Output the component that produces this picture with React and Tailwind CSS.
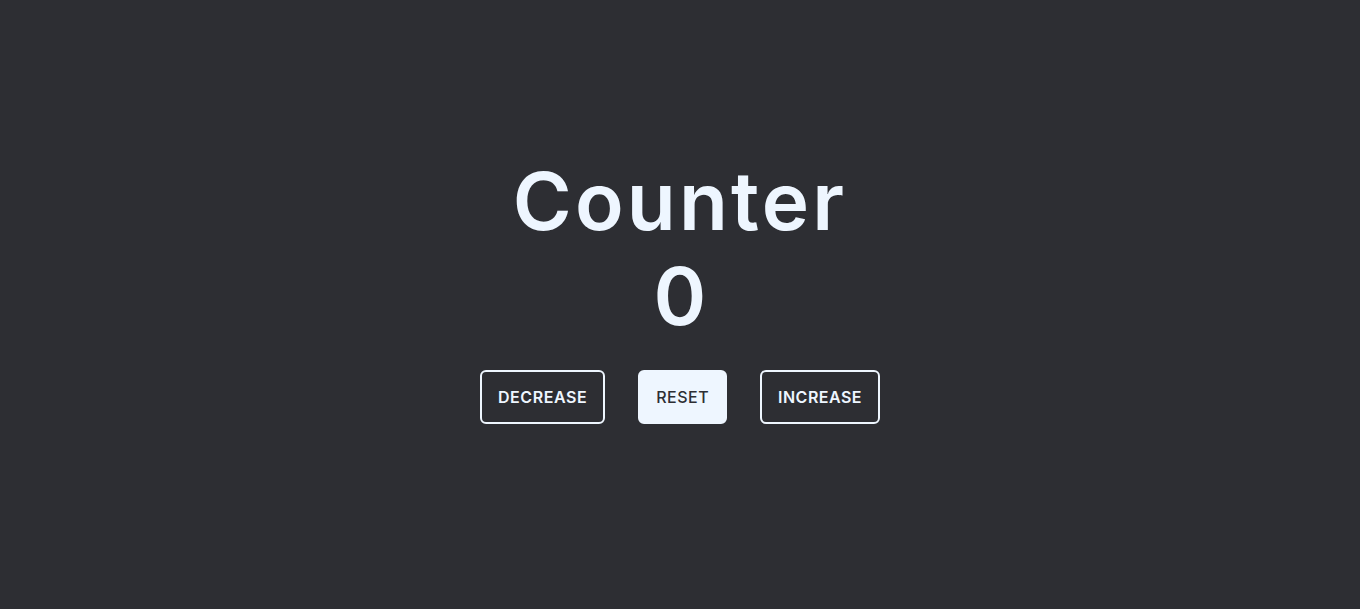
import { useState } from "react";

function App() {
  const [count, setCount] = useState(0);

  return (
    <main className="flex min-h-[609px] flex-col items-center bg-[#2d2e33] pt-[153px] font-['Inter',sans-serif] text-[#eef6ff]">
      <h1 className="text-[80px] font-semibold leading-[95px] tracking-[0.04em]">Counter</h1>
      <p className="text-[80px] font-semibold leading-[96px]">{count}</p>
      <div className="mt-[26px] flex gap-[33px]">
        <button
          onClick={() => setCount((prev) => prev - 1)}
          className="h-[54px] rounded-md border-2 border-[#eef6ff] px-4 text-[16px] font-semibold tracking-[0.035em] text-[#eef6ff]"
        >
          DECREASE
        </button>
        <button
          onClick={() => setCount(0)}
          className="h-[54px] rounded-md border-2 border-[#eef6ff] bg-[#eef6ff] px-4 text-[16px] font-medium tracking-[0.03em] text-[#2d2e33]"
        >
          RESET
        </button>
        <button
          onClick={() => setCount((prev) => prev + 1)}
          className="h-[54px] rounded-md border-2 border-[#eef6ff] px-4 text-[16px] font-semibold tracking-[0.03em] text-[#eef6ff]"
        >
          INCREASE
        </button>
      </div>
    </main>
  );
}

export default App;
